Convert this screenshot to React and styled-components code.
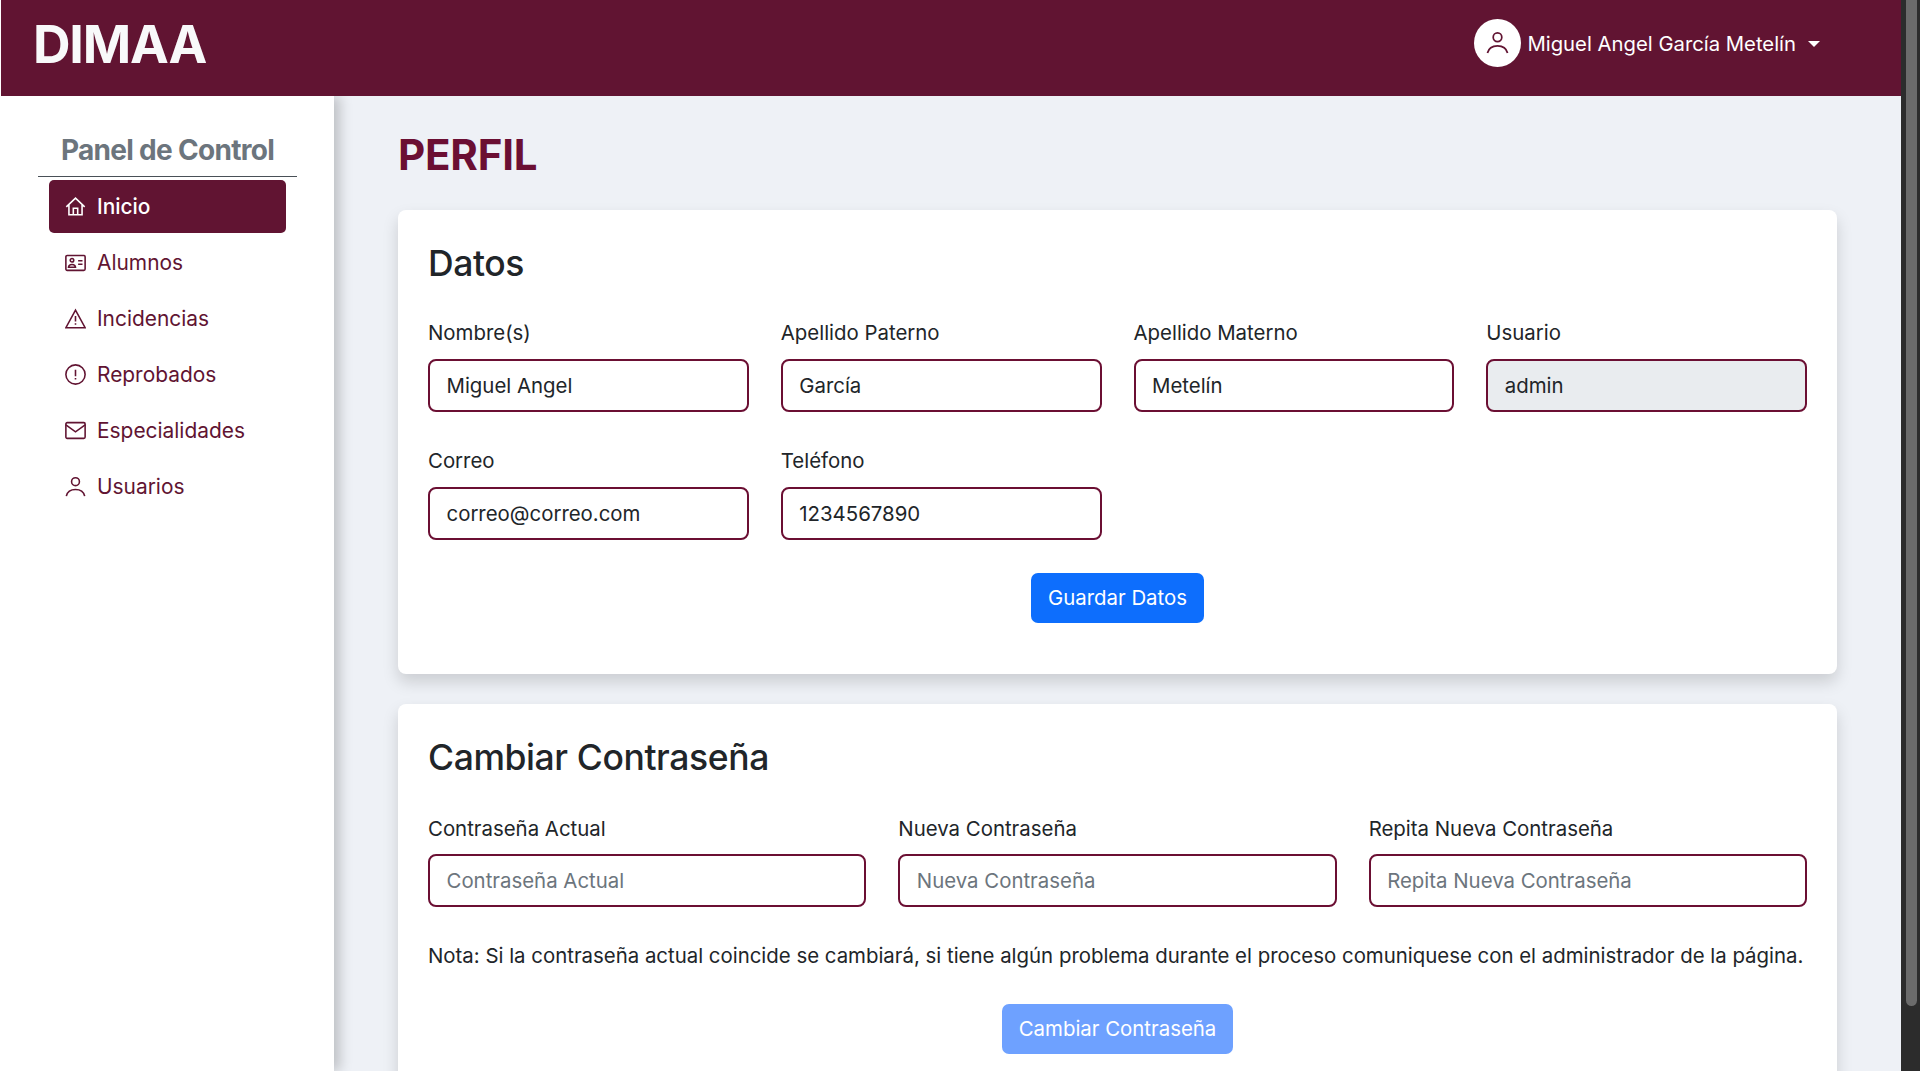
import styled, { createGlobalStyle } from "styled-components";

const HouseIcon = () => (
  <Glyph viewBox="0 0 24 24">
    <path d="M1.5 12.5 12 2.500l10.500 10M4.500 10v11.500h15V10M9.500 21.500V14h5v7.500" />
  </Glyph>
);

const CardIcon = () => (
  <Glyph viewBox="0 0 24 24">
    <rect x="1" y="4" width="22" height="17" rx="1.5" />
    <circle cx="8" cy="9.5" r="2" />
    <path d="M4 17.5c.3-4.400 7.700-4.400 8 0zM15 10h5M15 14h5" />
  </Glyph>
);

const TriangleIcon = () => (
  <Glyph viewBox="0 0 24 24">
    <path d="M12 2.500 23 22.500H1zM12 9v6.500M12 17.500v1.500" />
  </Glyph>
);

const CircleIcon = () => (
  <Glyph viewBox="0 0 24 24">
    <circle cx="12" cy="12" r="11" />
    <path d="M12 6.500v7.500M12 16v1.800" />
  </Glyph>
);

const MailIcon = () => (
  <Glyph viewBox="0 0 24 24">
    <rect x="1" y="3" width="22" height="18" rx="1.500" />
    <path d="M1 5.500 12 13.500l11-8" />
  </Glyph>
);

const PersonIcon = () => (
  <Glyph viewBox="0 0 24 24">
    <circle cx="12" cy="6.500" r="4.500" />
    <path d="M1.500 23c1.200-5 5.200-7.500 10.500-7.500S21.300 18 22.500 23" />
  </Glyph>
);

const menu = [
  { label: "Inicio", icon: HouseIcon, active: true },
  { label: "Alumnos", icon: CardIcon },
  { label: "Incidencias", icon: TriangleIcon },
  { label: "Reprobados", icon: CircleIcon },
  { label: "Especialidades", icon: MailIcon },
  { label: "Usuarios", icon: PersonIcon },
];

const datos = [
  { label: "Nombre(s)", value: "Miguel Angel" },
  { label: "Apellido Paterno", value: "García" },
  { label: "Apellido Materno", value: "Metelín" },
  { label: "Usuario", value: "admin", disabled: true },
  { label: "Correo", value: "correo@correo.com" },
  { label: "Teléfono", value: "1234567890" },
];

const claves = ["Contraseña Actual", "Nueva Contraseña", "Repita Nueva Contraseña"];

export default function App() {
  return (
    <>
      <GlobalStyle />
      <Screen>
        <Page>
          <Header>
            <Logo>DIMAA</Logo>
            <UserMenu>
              <Avatar>
                <PersonIcon />
              </Avatar>
              <UserName>Miguel Angel García Metelín</UserName>
              <Caret />
            </UserMenu>
          </Header>
          <Body>
            <Sidebar>
              <SideTitle>Panel de Control</SideTitle>
              <SideList>
                {menu.map(({ label, icon: Icon, active }) => (
                  <SideItem key={label} $active={active}>
                    <Icon />
                    {label}
                  </SideItem>
                ))}
              </SideList>
            </Sidebar>
            <Main>
              <PageTitle>PERFIL</PageTitle>
              <Card>
                <CardTitle $gap={33}>Datos</CardTitle>
                <FieldGrid $cols={4}>
                  {datos.map((d) => (
                    <Field key={d.label}>
                      <Label>{d.label}</Label>
                      <Input value={d.value} disabled={d.disabled} readOnly />
                    </Field>
                  ))}
                </FieldGrid>
                <ButtonRow>
                  <Button>Guardar Datos</Button>
                </ButtonRow>
                <CardEnd />
              </Card>
              <Card>
                <CardTitle $gap={35}>Cambiar Contraseña</CardTitle>
                <FieldGrid $cols={3}>
                  {claves.map((c) => (
                    <Field key={c}>
                      <Label>{c}</Label>
                      <Input placeholder={c} readOnly />
                    </Field>
                  ))}
                </FieldGrid>
                <Note>
                  Nota: Si la contraseña actual coincide se cambiará, si tiene algún problema durante el
                  proceso comuniquese con el administrador de la página.
                </Note>
                <ButtonRow>
                  <Button disabled>Cambiar Contraseña</Button>
                </ButtonRow>
                <CardEnd />
              </Card>
            </Main>
          </Body>
        </Page>
        <ScrollTrack>
          <ScrollThumb />
        </ScrollTrack>
      </Screen>
    </>
  );
}

const GlobalStyle = createGlobalStyle`
  html, body {
    margin: 0;
    height: 100%;
    overflow: hidden;
    background: #fff;
  }
  * {
    box-sizing: border-box;
  }
  body {
    font-family: "Inter", "Liberation Sans", sans-serif;
    color: #212529;
  }
`;

const Glyph = styled.svg`
  fill: none;
  flex: none;
  height: 21px;
  stroke: currentColor;
  stroke-width: 1.8;
  width: 21px;
`;

const Screen = styled.div`
  display: flex;
  height: 1080px;
  width: 1920px;
  background: #fff;
`;

const Page = styled.div`
  display: flex;
  flex-direction: column;
  flex: 1;
  height: 1071px;
  margin-left: 1px;
  min-width: 0;
  overflow: hidden;
`;

const ScrollTrack = styled.div`
  width: 19px;
  height: 1071px;
  background: #2c2c2c;
  padding: 0 3px 0 5px;
`;

const ScrollThumb = styled.div`
  height: 1006px;
  background: #6b6b6b;
  border-radius: 0 0 6px 6px;
`;

const Header = styled.header`
  align-items: center;
  background: #611432;
  display: flex;
  flex: none;
  height: 96px;
  justify-content: space-between;
  padding: 0 81px 0 32px;
  position: relative;
  z-index: 2;
`;

const Logo = styled.div`
  color: #f8f9fa;
  font-size: 52px;
  font-weight: 700;
  letter-spacing: -1.2px;
  line-height: 1;
  margin-top: -7px;
`;

const UserMenu = styled.div`
  align-items: center;
  color: #fff;
  display: flex;
  font-size: 20.3px;
  margin-top: -9px;
`;

const Avatar = styled.div`
  align-items: center;
  background: #fff;
  border-radius: 50%;
  color: #611432;
  display: flex;
  height: 48px;
  justify-content: center;
  margin: -2px 6px 0 0;
  width: 47px;

  svg {
    height: 23px;
    width: 23px;
  }
`;

const UserName = styled.span`
  white-space: nowrap;
`;

const Caret = styled.span`
  border-left: 6px solid transparent;
  border-right: 6px solid transparent;
  border-top: 6px solid #fff;
  margin-left: 12px;
`;

const Body = styled.div`
  display: flex;
  flex: 1;
  min-height: 0;
`;

const Sidebar = styled.aside`
  background: #fff;
  box-shadow: 6px 0 12px rgba(0, 0, 0, 0.2);
  flex: none;
  padding: 0 37px 0 37px;
  position: relative;
  width: 333px;
  z-index: 1;
`;

const SideTitle = styled.h2`
  border-bottom: 1.5px solid #495057;
  color: #6c757d;
  font-size: 28px;
  font-weight: 700;
  letter-spacing: -0.7px;
  line-height: 34px;
  margin: 0;
  padding: 37px 0 9px;
  text-align: center;
`;

const SideList = styled.nav`
  display: flex;
  flex-direction: column;
  gap: 3px;
  padding: 3px 11px 0;
`;

const SideItem = styled.a`
  align-items: center;
  background: ${(p) => (p.$active ? "#611432" : "transparent")};
  border-radius: 5px;
  color: ${(p) => (p.$active ? "#fff" : "#611432")};
  display: flex;
  font-size: 20.9px;
  font-weight: ${(p) => (p.$active ? 500 : 400)};
  gap: 11px;
  height: 53px;
  padding: 0 16px;
`;

const Main = styled.main`
  background: #eef1f6;
  flex: 1;
  min-width: 0;
  overflow: hidden;
  padding: 0 64px 0 64px;
`;

const PageTitle = styled.h1`
  color: #6b0f33;
  font-size: 42px;
  font-weight: 700;
  letter-spacing: -0.2px;
  line-height: 48px;
  margin: 35px 0 31px;
`;

const Card = styled.section`
  background: #fff;
  border-radius: 8px;
  box-shadow: 0 8px 16px rgba(0, 0, 0, 0.15);
  margin-bottom: 30px;
  padding: 30px;
`;

const CardTitle = styled.h3`
  font-size: 35.5px;
  font-weight: 500;
  letter-spacing: -0.4px;
  line-height: 48px;
  margin: 0 0 ${(p) => p.$gap}px;
`;

const FieldGrid = styled.div`
  display: grid;
  column-gap: 32px;
  grid-template-columns: repeat(${(p) => p.$cols}, 1fr);
  row-gap: 37.5px;
`;

const Field = styled.div`
  display: flex;
  flex-direction: column;
  gap: 13.5px;
`;

const Label = styled.label`
  font-size: 20.4px;
  line-height: 24px;
`;

const Input = styled.input`
  background: ${(p) => (p.disabled ? "#e9ecef" : "#fff")};
  border: 2.5px solid #6b0f33;
  border-radius: 8px;
  color: #212529;
  font-family: inherit;
  font-size: 20.4px;
  height: 53px;
  outline: none;
  padding: 0 16.5px;
  width: 100%;

  &::placeholder {
    color: #6c757d;
    opacity: 1;
  }
`;

const ButtonRow = styled.div`
  display: flex;
  justify-content: center;
  margin-top: 33px;
`;

const Button = styled.button`
  background: ${(p) => (p.disabled ? "#6ea1ff" : "#0d6efd")};
  border: 0;
  border-radius: 7px;
  color: #fff;
  font-family: inherit;
  font-size: 20.4px;
  height: 50px;
  padding: 0 17px;
`;

const Note = styled.p`
  font-size: 20.4px;
  line-height: 24px;
  margin: 37px 0 35.5px;
  white-space: nowrap;
`;

const CardEnd = styled.div`
  height: 21px;
`;
